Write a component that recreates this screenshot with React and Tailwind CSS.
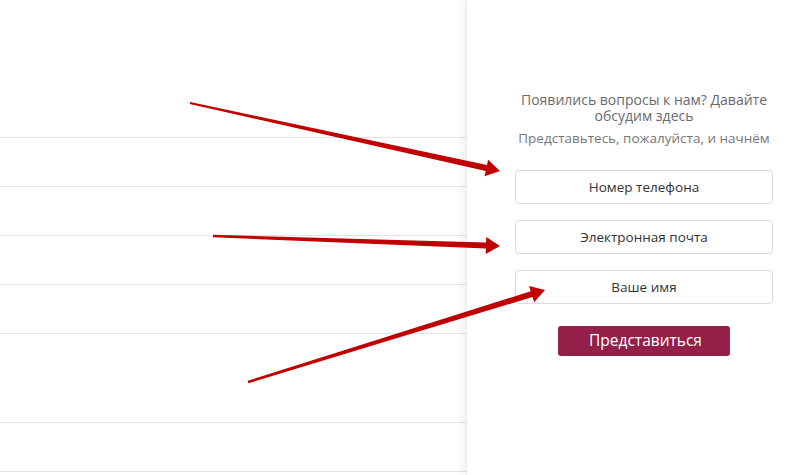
import React from "react";

const arrows = [
  { x1: 190, y1: 103, x2: 500, y2: 171, w1: 2, w2: 6 },
  { x1: 213, y1: 236, x2: 500, y2: 246, w1: 2.5, w2: 6 },
  { x1: 248, y1: 382, x2: 545, y2: 290, w1: 2.5, w2: 6 },
];

// tapered shaft + triangular head
const arrowPoints = ({ x1, y1, x2, y2, w1, w2 }) => {
  const dx = x2 - x1;
  const dy = y2 - y1;
  const len = Math.hypot(dx, dy);
  const ux = dx / len;
  const uy = dy / len;
  const nx = -uy;
  const ny = ux;
  const headLen = 14;
  const headW = 8.5;
  const bx = x2 - ux * headLen;
  const by = y2 - uy * headLen;
  const p = (x, y) => `${x.toFixed(1)},${y.toFixed(1)}`;
  return [
    p(x1 + nx * w1 / 2, y1 + ny * w1 / 2),
    p(bx + nx * w2 / 2, by + ny * w2 / 2),
    p(bx + nx * headW, by + ny * headW),
    p(x2, y2),
    p(bx - nx * headW, by - ny * headW),
    p(bx - nx * w2 / 2, by - ny * w2 / 2),
    p(x1 - nx * w1 / 2, y1 - ny * w1 / 2),
  ].join(" ");
};

const rows = [49, 49, 49, 49, 89, 49];

const Field = ({ label }) => (
  <div className="h-[34px] w-[258px] rounded-[4px] border border-[#dcdcdc] bg-white flex items-center justify-center text-[13.5px] text-[#333]">
    {label}
  </div>
);

export default function App() {
  return (
    <div
      className="relative w-[800px] h-[475px] overflow-hidden bg-white flex"
      style={{ fontFamily: '"Open Sans", "Noto Sans", sans-serif' }}
    >
      {/* left list */}
      <div className="w-[466px] shrink-0">
        <div className="h-[138px] border-b border-[#e3e3e3]" />
        {rows.map((h, i) => (
          <div key={i} className="border-b border-[#e3e3e3]" style={{ height: h }} />
        ))}
      </div>

      {/* chat panel */}
      <div className="flex-1 bg-white shadow-[-4px_0_8px_rgba(0,0,0,0.06)] border-l border-[#eeeeee] pt-[92px] pl-[48px]">
        <div className="w-[258px] text-center">
          <p className="text-[14px] leading-[16px] text-[#6a6a6a]">
            Появились вопросы к нам? Давайте обсудим здесь
          </p>
          <p className="mt-[6px] text-[13.5px] leading-[16px] text-[#777]">
            Представьтесь, пожалуйста, и начнём
          </p>
        </div>
        <div className="mt-[24px] flex flex-col gap-[16px]">
          <Field label="Номер телефона" />
          <Field label="Электронная почта" />
          <Field label="Ваше имя" />
        </div>
        <div className="w-[258px] flex justify-center mt-[22px]">
          <button className="w-[172px] h-[30px] rounded-[3px] bg-[#941f48] text-white text-[15.5px] pl-[3px]">
            Представиться
          </button>
        </div>
      </div>

      {/* annotation arrows */}
      <svg className="absolute inset-0 pointer-events-none" width="800" height="475">
        {arrows.map((a, i) => (
          <polygon key={i} points={arrowPoints(a)} fill="#c00000" />
        ))}
      </svg>
    </div>
  );
}
